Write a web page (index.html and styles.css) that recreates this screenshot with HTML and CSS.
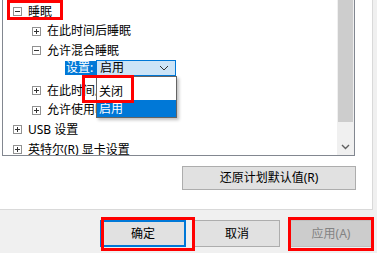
FILE: index.html
```html
<!DOCTYPE html>
<html lang="zh-CN">
<head>
<meta charset="utf-8">
<link rel="stylesheet" href="styles.css">
</head>
<body>
<div class="dialog">
  <div class="panel">
    <div class="listbox">
      <div class="tree">
        <div class="row lvl0">
          <svg class="exp" width="9" height="9" viewBox="0 0 9 9"><rect x="0.5" y="0.5" width="8" height="8" fill="#fff" stroke="#919191"/><path d="M2 4.5H7" stroke="#333"/></svg>
          <span>睡眠</span>
        </div>
        <div class="row lvl1">
          <svg class="exp" width="9" height="9" viewBox="0 0 9 9"><rect x="0.5" y="0.5" width="8" height="8" fill="#fff" stroke="#919191"/><path d="M2 4.5H7M4.5 2V7" stroke="#333"/></svg>
          <span>在此时间后睡眠</span>
        </div>
        <div class="row lvl1">
          <svg class="exp" width="9" height="9" viewBox="0 0 9 9"><rect x="0.5" y="0.5" width="8" height="8" fill="#fff" stroke="#919191"/><path d="M2 4.5H7" stroke="#333"/></svg>
          <span>允许混合睡眠</span>
        </div>
        <div class="row lvl2">
          <span class="setting-label">设置:</span>
          <div class="combo">
            <span>启用</span>
            <svg width="10" height="6" viewBox="0 0 10 6"><path d="M1 1L5 5L9 1" fill="none" stroke="#333" stroke-width="1"/></svg>
          </div>
        </div>
        <div class="row lvl1">
          <svg class="exp" width="9" height="9" viewBox="0 0 9 9"><rect x="0.5" y="0.5" width="8" height="8" fill="#fff" stroke="#919191"/><path d="M2 4.5H7M4.5 2V7" stroke="#333"/></svg>
          <span>在此时间后休眠</span>
        </div>
        <div class="row lvl1">
          <svg class="exp" width="9" height="9" viewBox="0 0 9 9"><rect x="0.5" y="0.5" width="8" height="8" fill="#fff" stroke="#919191"/><path d="M2 4.5H7M4.5 2V7" stroke="#333"/></svg>
          <span>允许使用唤醒定时器</span>
        </div>
        <div class="row lvl0">
          <svg class="exp" width="9" height="9" viewBox="0 0 9 9"><rect x="0.5" y="0.5" width="8" height="8" fill="#fff" stroke="#919191"/><path d="M2 4.5H7M4.5 2V7" stroke="#333"/></svg>
          <span>USB 设置</span>
        </div>
        <div class="row lvl0">
          <svg class="exp" width="9" height="9" viewBox="0 0 9 9"><rect x="0.5" y="0.5" width="8" height="8" fill="#fff" stroke="#919191"/><path d="M2 4.5H7M4.5 2V7" stroke="#333"/></svg>
          <span>英特尔(R) 显卡设置</span>
        </div>
      </div>
      <div class="scrollbar">
        <div class="thumb"></div>
        <div class="track"></div>
        <div class="arrow">
          <svg width="9" height="6" viewBox="0 0 9 6"><path d="M1 1L4.5 4.5L8 1" fill="none" stroke="#606060" stroke-width="1.4"/></svg>
        </div>
      </div>
    </div>
    <div class="restore-row">
      <button class="btn restore">还原计划默认值(R)</button>
    </div>
  </div>
  <div class="footer">
    <button class="btn primary">确定</button>
    <button class="btn">取消</button>
    <button class="btn disabled">应用(A)</button>
  </div>

  <div class="dropdown">
    <div class="option">关闭</div>
    <div class="option selected">启用</div>
  </div>

  <div class="mark mark-sleep"></div>
  <div class="mark mark-off"></div>
  <div class="mark mark-ok"></div>
  <div class="mark mark-apply"></div>
</div>
</body>
</html>
```
FILE: styles.css
```css
* { box-sizing: border-box; }
html, body {
  margin: 0;
  padding: 0;
  width: 377px;
  height: 253px;
  overflow: hidden;
  background: #f0f0f0;
  font-family: "Noto Sans", "Noto Sans CJK SC", sans-serif;
  font-size: 12px;
  color: #000;
}
.dialog {
  position: relative;
  width: 377px;
  height: 253px;
  overflow: hidden;
}
.panel {
  width: 373px;
  height: 211px;
  background: #fff;
  border-right: 1px solid #d9d9d9;
  border-bottom: 1px solid #d9d9d9;
}
.listbox {
  margin-left: 2px;
  margin-top: -1px;
  width: 353px;
  height: 157px;
  border: 1px solid #828790;
  display: flex;
  overflow: hidden;
}
.tree {
  flex: 1;
  padding-top: 1.5px;
  overflow: hidden;
}
.row {
  height: 19.75px;
  display: flex;
  align-items: center;
  white-space: nowrap;
  line-height: 19.75px;
}
.row .exp { flex: none; margin-right: 6px; }
.lvl0 { padding-left: 10px; }
.lvl1 { padding-left: 29px; }
.lvl2 {
  padding-left: 62px;
  align-items: flex-start;
  padding-top: 0.5px;
}
.setting-label {
  background: #0078d7;
  color: #fff;
  height: 14px;
  line-height: 14px;
  padding: 0 1px 0 1px;
  width: 31px;
}
.combo {
  margin-top: -1px;
  width: 80px;
  height: 16px;
  border: 1px solid #0078d7;
  background: #cce4f7;
  display: flex;
  align-items: center;
  justify-content: space-between;
  padding: 0 6px 0 3px;
  line-height: 14px;
}
.scrollbar {
  width: 17px;
  flex: none;
  background: #f0f0f0;
  display: flex;
  flex-direction: column;
}
.thumb {
  height: 122px;
  margin: 0 1px;
  background: #cdcdcd;
}
.track { flex: 1; }
.arrow {
  height: 17px;
  display: flex;
  align-items: center;
  justify-content: center;
}
.restore-row {
  display: flex;
  justify-content: flex-end;
  padding-right: 16px;
  margin-top: 10px;
}
.btn {
  font: inherit;
  color: #000;
  background: #e1e1e1;
  border: 1px solid #adadad;
  padding: 0;
  margin: 0;
  height: 24px;
  line-height: 22px;
}
.restore { width: 174px; }
.footer {
  display: flex;
  justify-content: flex-end;
  gap: 8px;
  padding-top: 10px;
  padding-right: 3px;
}
.footer .btn { width: 86px; height: 27px; }
.primary { border: 2px solid #0078d7; }
.disabled {
  background: #cccccc;
  border-color: #bfbfbf;
  color: #838383;
}
.dropdown {
  position: absolute;
  left: 96px;
  top: 76px;
  width: 81px;
  height: 42px;
  background: #fff;
  border: 1px solid #646464;
  padding-top: 6px;
  box-shadow: 2px 2px 3px rgba(0,0,0,0.25);
}
.option {
  height: 17px;
  line-height: 17px;
  padding-left: 2px;
}
.option.selected {
  background: #0078d7;
  color: #fff;
}
.mark {
  position: absolute;
  border: 3px solid #f00;
}
.mark-sleep { left: 7px; top: 0; width: 56px; height: 20px; }
.mark-off { left: 82px; top: 75px; width: 52px; height: 28px; }
.mark-ok { left: 101px; top: 217px; width: 94px; height: 34px; }
.mark-apply { left: 288px; top: 217px; width: 86px; height: 34px; }
```
